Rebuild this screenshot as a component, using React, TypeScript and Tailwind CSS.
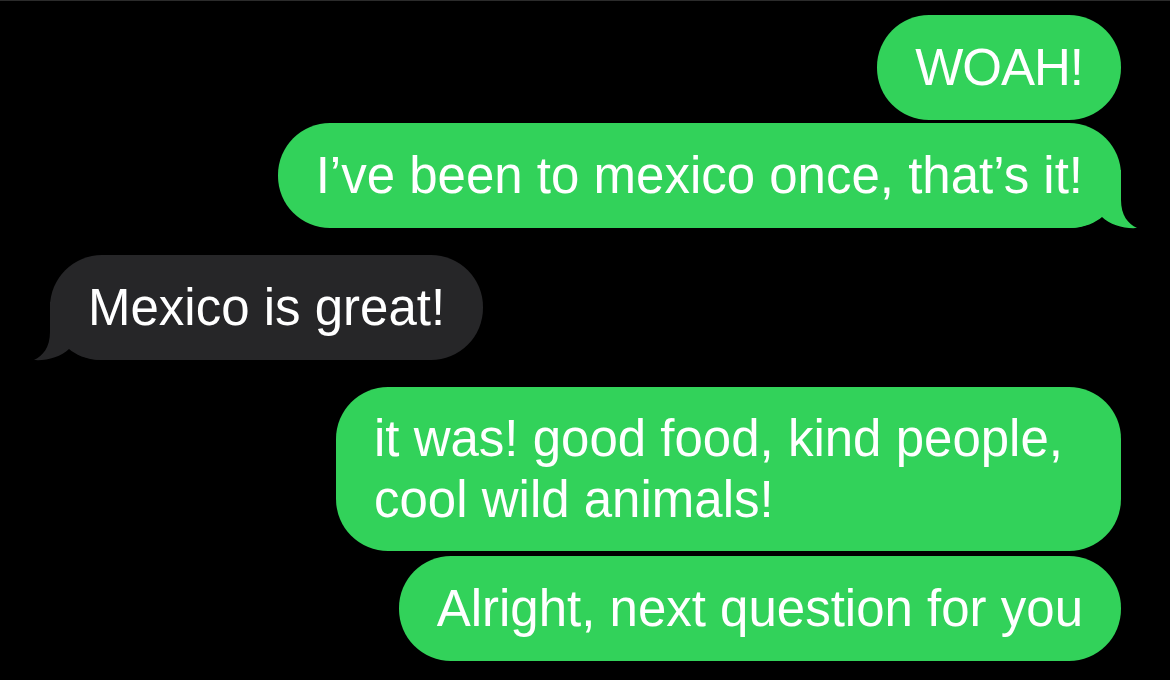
const GREEN = "#32d25a"
const GRAY = "#262628"

function Tail({ color, side }: { color: string; side: "left" | "right" }) {
  return (
    <svg
      width="70"
      height="60"
      viewBox="0 0 70 60"
      className={
        side === "right"
          ? "absolute right-[-18px] bottom-0 overflow-visible"
          : "absolute left-[-18px] bottom-0 overflow-visible -scale-x-100"
      }
    >
      <path
        d="M52 2 L52 32 C52 47 59 56 68 60 C56 61 41 57 33 49 C27 54 16 60 1 60 L1 2 Z"
        fill={color}
      />
    </svg>
  )
}

interface BubbleProps {
  children: React.ReactNode;
  sent?: boolean;
  tail?: boolean;
  className?: string;
}

function Bubble({ children, sent = true, tail = false, className = "" }: BubbleProps) {
  return (
    <div
      className={`relative max-w-[880px] rounded-[52px] px-[38px] py-[22px] text-[51px] leading-[61px] text-white ${
        sent ? "self-end bg-[#32d25a]" : "self-start bg-[#262628]"
      } ${className}`}
    >
      {tail && <Tail color={sent ? GREEN : GRAY} side={sent ? "right" : "left"} />}
      <span className="relative">{children}</span>
    </div>
  )
}

export default function App() {
  return (
    <div
      className="h-[680px] w-full overflow-hidden border-t border-[#2b2b2b] bg-black"
      style={{ fontFamily: '"Liberation Sans", Arial, sans-serif' }}
    >
      <div className="flex flex-col pt-[14px] pr-[49px] pl-[50px]">
        <Bubble className="tracking-[-1px]">WOAH!</Bubble>
        <Bubble tail className="mt-[3px]">I’ve been to mexico once, that’s it!</Bubble>
        <Bubble sent={false} tail className="mt-[27px]">Mexico is great!</Bubble>
        <Bubble className="mt-[27px] w-[785px] !py-[21px]">
          it was! good food, kind people, cool wild animals!
        </Bubble>
        <Bubble className="mt-[5px]">Alright, next question for you</Bubble>
      </div>
    </div>
  )
}
